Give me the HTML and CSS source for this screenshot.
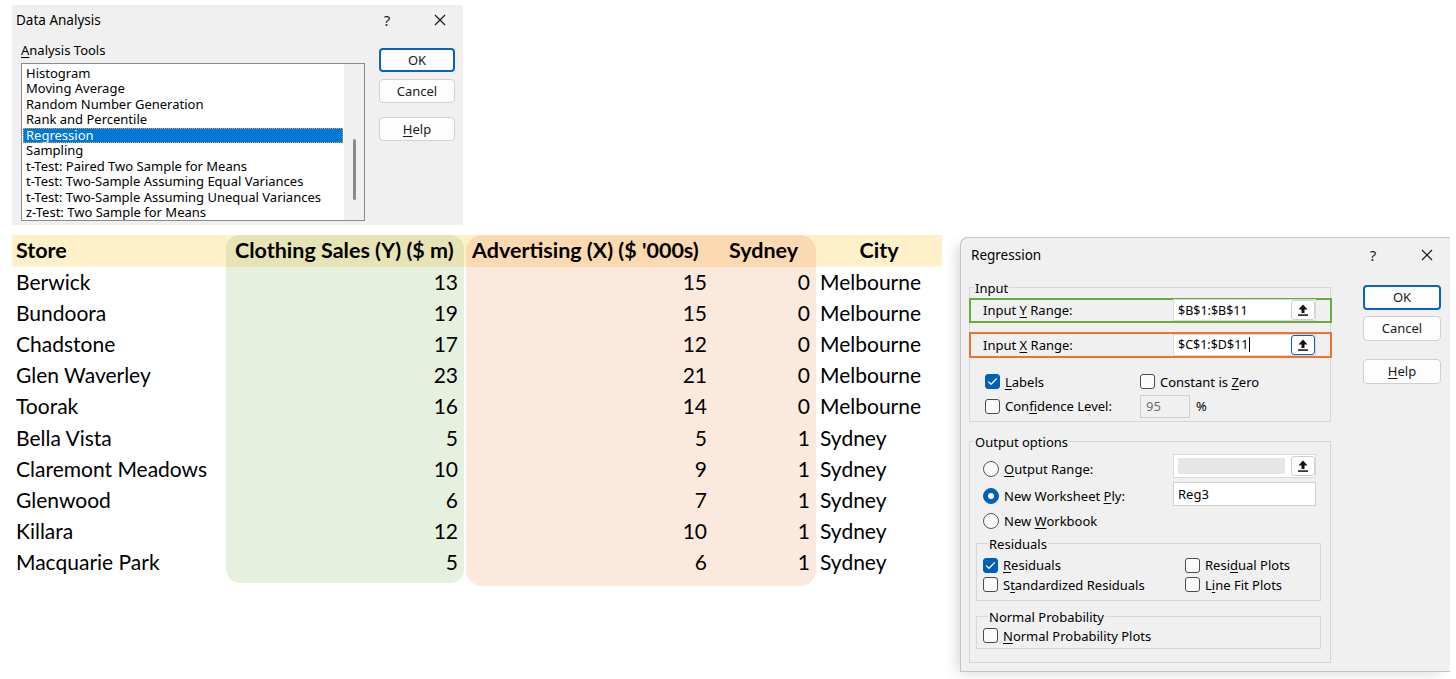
FILE: index.html
```html
<!DOCTYPE html>
<html lang="en">
<head>
<meta charset="utf-8">
<title>Data Analysis - Regression</title>
<link rel="stylesheet" href="styles.css">
</head>
<body>
<div class="page">

  <section class="dlg da">
    <div class="titlebar">
      <span class="title">Data Analysis</span>
      <span class="tb-q">?</span>
      <span class="tb-x"><svg width="12" height="12" viewBox="0 0 12 12"><path d="M1 1L11 11M11 1L1 11" stroke="#1b1b1b" stroke-width="1.2" fill="none"/></svg></span>
    </div>
    <div class="da-body">
      <div class="da-left">
        <div class="da-label"><u>A</u>nalysis Tools</div>
        <div class="listbox">
          <ul class="items">
            <li>Histogram</li>
            <li>Moving Average</li>
            <li>Random Number Generation</li>
            <li>Rank and Percentile</li>
            <li class="sel">Regression</li>
            <li>Sampling</li>
            <li>t-Test: Paired Two Sample for Means</li>
            <li>t-Test: Two-Sample Assuming Equal Variances</li>
            <li>t-Test: Two-Sample Assuming Unequal Variances</li>
            <li>z-Test: Two Sample for Means</li>
          </ul>
          <div class="vscroll"><div class="thumb"></div></div>
        </div>
      </div>
      <div class="btncol da-btns">
        <div class="btn primary">OK</div>
        <div class="btn">Cancel</div>
        <div class="btn spaced"><u>H</u>elp</div>
      </div>
    </div>
  </section>

  <div class="bottom">
    <div class="sheet">
      <div class="col store">
        <div class="hd">Store</div>
        <div class="cell">Berwick</div>
        <div class="cell">Bundoora</div>
        <div class="cell">Chadstone</div>
        <div class="cell">Glen Waverley</div>
        <div class="cell">Toorak</div>
        <div class="cell">Bella Vista</div>
        <div class="cell">Claremont Meadows</div>
        <div class="cell">Glenwood</div>
        <div class="cell">Killara</div>
        <div class="cell">Macquarie Park</div>
      </div>
      <div class="grp green">
        <div class="col sales">
          <div class="hd">Clothing Sales (Y) ($ m)</div>
          <div class="cell num">13</div>
          <div class="cell num">19</div>
          <div class="cell num">17</div>
          <div class="cell num">23</div>
          <div class="cell num">16</div>
          <div class="cell num">5</div>
          <div class="cell num">10</div>
          <div class="cell num">6</div>
          <div class="cell num">12</div>
          <div class="cell num">5</div>
        </div>
      </div>
      <div class="grp orange">
        <div class="col adv">
          <div class="hd">Advertising (X) ($ '000s)</div>
          <div class="cell num">15</div>
          <div class="cell num">15</div>
          <div class="cell num">12</div>
          <div class="cell num">21</div>
          <div class="cell num">14</div>
          <div class="cell num">5</div>
          <div class="cell num">9</div>
          <div class="cell num">7</div>
          <div class="cell num">10</div>
          <div class="cell num">6</div>
        </div>
        <div class="col syd">
          <div class="hd">Sydney</div>
          <div class="cell num">0</div>
          <div class="cell num">0</div>
          <div class="cell num">0</div>
          <div class="cell num">0</div>
          <div class="cell num">0</div>
          <div class="cell num">1</div>
          <div class="cell num">1</div>
          <div class="cell num">1</div>
          <div class="cell num">1</div>
          <div class="cell num">1</div>
        </div>
      </div>
      <div class="col city">
        <div class="hd">City</div>
        <div class="cell">Melbourne</div>
        <div class="cell">Melbourne</div>
        <div class="cell">Melbourne</div>
        <div class="cell">Melbourne</div>
        <div class="cell">Melbourne</div>
        <div class="cell">Sydney</div>
        <div class="cell">Sydney</div>
        <div class="cell">Sydney</div>
        <div class="cell">Sydney</div>
        <div class="cell">Sydney</div>
      </div>
    </div>

    <section class="dlg reg">
      <div class="titlebar">
        <span class="title">Regression</span>
        <span class="tb-q">?</span>
        <span class="tb-x"><svg width="12" height="12" viewBox="0 0 12 12"><path d="M1 1L11 11M11 1L1 11" stroke="#1b1b1b" stroke-width="1.2" fill="none"/></svg></span>
      </div>
      <div class="reg-body">
        <div class="reg-main">
          <fieldset class="gbox input-box">
            <legend>Input</legend>
            <div class="range-row hl-green">
              <span class="rlabel">Input <u>Y</u> Range:</span>
              <span class="refedit">
                <span class="reftext">$B$1:$B$11</span>
                <span class="pick"><svg width="10" height="12" viewBox="0 0 10 12"><path d="M5 0.5L9.5 5.5H6.5V9H3.5V5.5H0.5Z" fill="#111"/><rect x="0" y="10.3" width="10" height="1.5" fill="#111"/></svg></span>
              </span>
            </div>
            <div class="range-row hl-orange">
              <span class="rlabel">Input <u>X</u> Range:</span>
              <span class="refedit">
                <span class="reftext">$C$1:$D$11<span class="caret"></span></span>
                <span class="pick focus"><svg width="10" height="12" viewBox="0 0 10 12"><path d="M5 0.5L9.5 5.5H6.5V9H3.5V5.5H0.5Z" fill="#111"/><rect x="0" y="10.3" width="10" height="1.5" fill="#111"/></svg></span>
              </span>
            </div>
            <div class="opt-grid">
              <div class="chk-row"><span class="cb on"><svg width="11" height="9" viewBox="0 0 11 9"><path d="M1.2 4.6L4 7.3L9.8 1.4" stroke="#fff" stroke-width="1.3" fill="none"/></svg></span><span><u>L</u>abels</span></div>
              <div class="chk-row"><span class="cb"></span><span>Constant is <u>Z</u>ero</span></div>
              <div class="chk-row"><span class="cb"></span><span>Con<u>f</u>idence Level:</span></div>
              <div class="conf"><span class="numbox">95</span><span class="pct">%</span></div>
            </div>
          </fieldset>

          <fieldset class="gbox output-box">
            <legend>Output options</legend>
            <div class="out-grid">
              <div class="rad-row orng"><span class="rb"></span><span><u>O</u>utput Range:</span></div>
              <span class="refedit out-ref">
                <span class="reftext"><span class="dis-fill"></span></span>
                <span class="pick"><svg width="10" height="12" viewBox="0 0 10 12"><path d="M5 0.5L9.5 5.5H6.5V9H3.5V5.5H0.5Z" fill="#111"/><rect x="0" y="10.3" width="10" height="1.5" fill="#111"/></svg></span>
              </span>
              <div class="rad-row ply"><span class="rb on"></span><span>New Worksheet <u>P</u>ly:</span></div>
              <span class="textbox">Reg3</span>
              <div class="rad-row wb"><span class="rb"></span><span>New <u>W</u>orkbook</span></div>
            </div>
            <fieldset class="gbox sub res">
              <legend>Residuals</legend>
              <div class="res-grid">
                <div class="chk-row"><span class="cb on"><svg width="11" height="9" viewBox="0 0 11 9"><path d="M1.2 4.6L4 7.3L9.8 1.4" stroke="#fff" stroke-width="1.3" fill="none"/></svg></span><span><u>R</u>esiduals</span></div>
                <div class="chk-row"><span class="cb"></span><span>Resi<u>d</u>ual Plots</span></div>
                <div class="chk-row"><span class="cb"></span><span>S<u>t</u>andardized Residuals</span></div>
                <div class="chk-row"><span class="cb"></span><span>L<u>i</u>ne Fit Plots</span></div>
              </div>
            </fieldset>
            <fieldset class="gbox sub np">
              <legend>Normal Probability</legend>
              <div class="chk-row"><span class="cb"></span><span><u>N</u>ormal Probability Plots</span></div>
            </fieldset>
          </fieldset>
        </div>
        <div class="btncol reg-btns">
          <div class="btn primary">OK</div>
          <div class="btn">Cancel</div>
          <div class="btn spaced"><u>H</u>elp</div>
        </div>
      </div>
    </section>
  </div>
</div>
</body>
</html>
```

FILE: styles.css
```css
* { box-sizing: border-box; }
html, body { margin: 0; padding: 0; background: #fff; }
body {
  width: 1456px;
  height: 679px;
  overflow: hidden;
  font-family: "Noto Sans", "Open Sans", sans-serif;
  font-size: 13px;
  color: #000;
}
u { text-decoration-thickness: 1px; text-underline-offset: 2px; }

.page { display: flex; flex-direction: column; padding-top: 5px; }

/* ---------- generic dialog ---------- */
.dlg { background: #f0f0f0; display: flex; flex-direction: column; }
.titlebar { display: flex; align-items: center; }
.title { flex: 1; font-size: 13.5px; color: #000; }
.tb-q, .tb-x { width: 46px; display: flex; align-items: center; justify-content: center; }
.tb-q { font-size: 15px; margin-right: 7px; color: #1b1b1b; }

.btncol { display: flex; flex-direction: column; }
.btn {
  width: 76px;
  height: 24px;
  border: 1px solid #d0d0d0;
  border-radius: 4px;
  background: #fdfdfd;
  display: flex;
  align-items: center;
  justify-content: center;
  font-size: 13px;
  color: #1a1a1a;
}
.btn + .btn { margin-top: 7px; }
.btn.spaced { margin-top: 14px; }
.btn.primary { border: 2px solid #0a63c2; }

/* ---------- Data Analysis dialog ---------- */
.da { margin-left: 12px; width: 451px; height: 220px; }
.da .titlebar { height: 30px; padding-left: 4px; }
.da-body { display: flex; padding-left: 9px; }
.da-left { display: flex; flex-direction: column; padding-top: 7px; }
.da-label { height: 16px; line-height: 16px; font-size: 13px; }
.listbox {
  margin-top: 5px;
  width: 344px;
  height: 158px;
  border: 1px solid #8b8b8b;
  background: #fff;
  display: flex;
}
.items { list-style: none; margin: 0; padding: 2px 1px 0 1px; flex: 1; }
.items li { height: 15.45px; line-height: 15.45px; padding-left: 3px; white-space: nowrap; font-size: 13px; }
.items li.sel { background: #0078d7; color: #fff; outline: 1px dotted #e8a33c; outline-offset: -1px; }
.vscroll { width: 20px; background: #f0f0f0; display: flex; justify-content: center; padding-top: 75px; }
.thumb { width: 3px; height: 61px; background: #8a8a8a; border-radius: 2px; }
.da-btns { margin-left: 14px; padding-top: 13px; }

/* ---------- sheet ---------- */
.bottom { display: flex; align-items: flex-start; margin-top: 10px; padding-left: 12px; }
.sheet {
  width: 930px;
  display: flex;
  align-items: flex-start;
  font-family: Lato, "Liberation Sans", sans-serif;
  font-size: 21px;
  color: #000;
  background: linear-gradient(#fef0c9, #fef0c9) 0 0 / 100% 31.6px no-repeat;
}
.col { display: flex; flex-direction: column; }
.hd { height: 31.6px; line-height: 31.6px; font-weight: 700; font-size: 21.5px; white-space: nowrap; }
.cell { height: 31.2px; line-height: 29.8px; white-space: nowrap; }
.num { text-align: right; }
.store { width: 214px; padding-left: 4px; }
.grp { overflow: hidden; }
.green { width: 238px; margin-right: 2px; border-radius: 14px; background: #e6f0de; padding-bottom: 5px; }
.green .hd { background: #e6e4b4; padding-left: 9px; }
.sales { width: 238px; }
.sales .num { padding-right: 6px; }
.orange { display: flex; width: 350px; border-radius: 16px; background: #fbe9dd; padding-bottom: 8px; }
.orange .hd { background: #fcdab1; }
.adv { width: 249px; }
.adv .hd { padding-left: 6px; }
.adv .num { padding-right: 8px; }
.syd { width: 101px; }
.syd .hd { padding-left: 14px; }
.syd .num { padding-right: 6px; }
.city { width: 126px; }
.city .hd { text-align: center; }
.city .cell { padding-left: 4px; }

/* ---------- Regression dialog ---------- */
.reg {
  margin-left: 18px;
  margin-top: 1.5px;
  width: 490px;
  height: 435px;
  border: 1px solid #c4c4c4;
  border-right: none;
  border-radius: 8px 0 0 0;
  box-shadow: -6px 4px 14px -4px rgba(0, 0, 0, 0.18);
}
.reg .titlebar { height: 35px; padding-left: 10px; }
.reg .tb-q { margin-right: 8px; }
.reg-body { display: flex; padding: 7px 0 0 8px; }
.reg-main { width: 363px; display: flex; flex-direction: column; }
.reg-btns { margin-left: 31px; padding-top: 5px; }
.reg-btns .btn { width: 78px; height: 25px; }
.reg-btns .btn + .btn { margin-top: 6px; }
.reg-btns .btn.spaced { margin-top: 18px; }

.gbox {
  margin: 0;
  padding: 0;
  border: 1px solid #d7d7d7;
  min-width: 0;
}
.gbox legend {
  padding: 0 1px;
  margin-left: 4px;
  height: 16px;
  line-height: 16px;
  font-size: 13px;
}
.input-box { width: 362px; padding-bottom: 3px; }

.range-row {
  display: flex;
  align-items: center;
  height: 25px;
  margin: 2px -2px 0 -1px;
  border: 2px solid;
  padding-left: 12px;
}
.hl-green { border-color: #6aa93c; }
.hl-orange { border-color: #ec7430; margin-top: 9px; height: 26px; }
.rlabel { flex: 1; font-size: 13px; }
.refedit {
  width: 143px;
  height: 22px;
  background: #fff;
  border: 1px solid #d9d9d9;
  display: flex;
  align-items: center;
  margin-right: 14px;
}
.reftext { flex: 1; padding-left: 4px; font-size: 12.5px; display: flex; align-items: center; }
.caret { width: 1px; height: 15px; background: #000; margin-left: 1px; }
.pick {
  width: 24px;
  height: 20px;
  border: 1px solid #cfcfcf;
  border-radius: 3px;
  background: #fff;
  display: flex;
  align-items: center;
  justify-content: center;
}
.pick.focus { border: 1.5px solid #0a63c2; }

.opt-grid {
  display: grid;
  grid-template-columns: 155px 1fr;
  align-items: center;
  row-gap: 5px;
  padding-left: 15px;
  margin-top: 16px;
}
.chk-row, .rad-row { display: flex; align-items: center; gap: 5px; font-size: 13px; height: 16px; white-space: nowrap; }
.cb {
  width: 15px;
  height: 15px;
  border: 1px solid #4c4c4c;
  border-radius: 3px;
  background: #fbfbfb;
  display: flex;
  align-items: center;
  justify-content: center;
  flex: none;
}
.cb.on { background: #005fb8; border-color: #005fb8; }
.conf { display: flex; align-items: center; gap: 6px; }
.numbox {
  width: 50px;
  height: 23px;
  border: 1px solid #cfcfcf;
  background: #f0f0f0;
  color: #6d6d6d;
  padding-left: 5px;
  display: flex;
  align-items: center;
}
.pct { font-size: 13px; }

.output-box { width: 362px; margin-top: 12px; padding: 0 0 13px 0; }
.out-grid {
  display: grid;
  grid-template-columns: 203px 143px;
  grid-auto-rows: auto;
  align-items: center;
  row-gap: 4px;
  margin-top: 4px;
  padding-left: 13px;
}
.out-grid .out-ref { height: 24px; margin-left: -13px; }
.out-grid .refedit { margin-right: 0; }
.dis-fill { width: 107px; height: 16px; background: #e6e6e6; }
.textbox {
  margin-left: -13px;
  height: 24px;
  width: 143px;
  background: #fff;
  border: 1px solid #d0d0d0;
  padding-left: 4px;
  display: flex;
  align-items: center;
  font-size: 13px;
}
.rad-row.orng { margin-top: 6px; }
.rad-row.ply { margin-top: 5px; }
.rad-row.wb { margin-top: 3px; }
.rb {
  width: 16px;
  height: 16px;
  border: 1px solid #575757;
  border-radius: 50%;
  background: #fafafa;
  flex: none;
  display: flex;
  align-items: center;
  justify-content: center;
}
.rb.on { background: #005fb8; border-color: #005fb8; }
.rb.on::after { content: ""; width: 6px; height: 6px; border-radius: 50%; background: #fff; }

.gbox.sub { width: 345px; margin: 7px 0 0 6px; }
.gbox.sub legend { margin-left: 5px; }
.res { padding: 0 0 7px 6px; }
.res-grid { display: grid; grid-template-columns: 202px 1fr; row-gap: 3.5px; margin-top: 5.5px; }
.gbox.sub.np { margin-top: 8px; padding: 3px 0 4px 6px; }
```
